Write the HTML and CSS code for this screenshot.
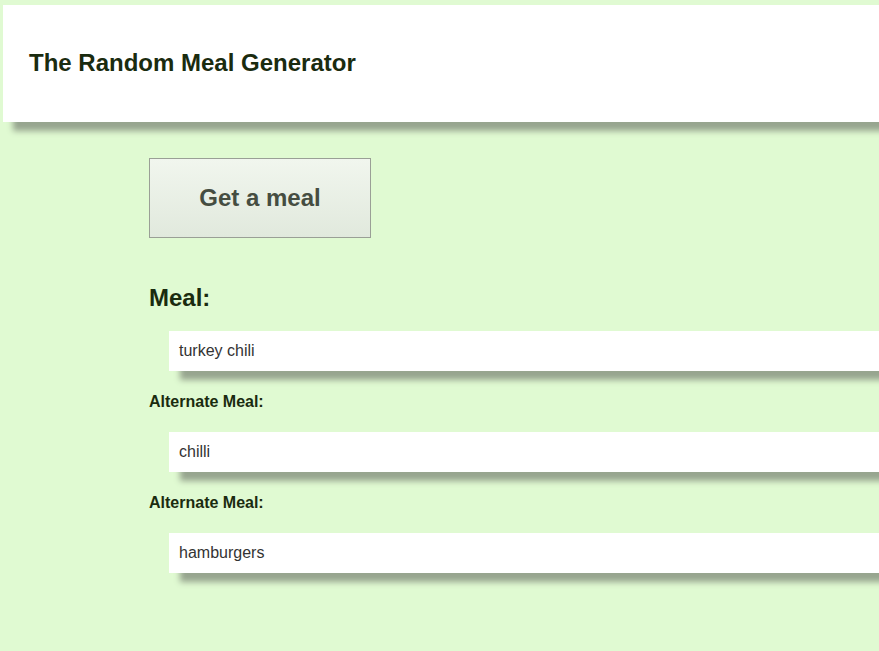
FILE: index.html
```html
<!DOCTYPE html>
<html>
<head>
<meta charset="utf-8">
<title>The Random Meal Generator</title>
<link rel="stylesheet" href="styles.css">
</head>
<body>
<header class="top">
  <h1 class="title">The Random Meal Generator</h1>
</header>
<main class="content">
  <button class="get-btn" type="button">Get a meal</button>
  <h2 class="meal-label">Meal:</h2>
  <div class="meal-box">turkey chili</div>
  <h3 class="alt-label">Alternate Meal:</h3>
  <div class="meal-box">chilli</div>
  <h3 class="alt-label">Alternate Meal:</h3>
  <div class="meal-box">hamburgers</div>
</main>
</body>
</html>
```
FILE: styles.css
```css
html, body {
  margin: 0;
  padding: 0;
  overflow: hidden;
}
body {
  background: #e0fad2;
  font-family: "Liberation Sans", Arial, sans-serif;
  color: #1a2b0f;
  padding-top: 5px;
  padding-left: 3px;
  height: 651px;
  box-sizing: border-box;
}
.top {
  background: #fff;
  height: 117px;
  display: flex;
  align-items: center;
  padding-left: 26px;
  box-shadow: 10px 9px 6px #97a58f;
}
.title {
  margin: 0;
  font-size: 24px;
  font-weight: bold;
  padding-bottom: 1px;
}
.content {
  padding-left: 146px;
  padding-top: 36px;
  display: flex;
  flex-direction: column;
  align-items: flex-start;
}
.get-btn {
  width: 222px;
  height: 80px;
  border: 1px solid #9a9f96;
  background: linear-gradient(#f1f6ee, #e1e9dd);
  font-family: "Liberation Sans", Arial, sans-serif;
  font-size: 24px;
  font-weight: bold;
  color: #454d41;
  padding: 0;
  margin: 0;
}
.meal-label {
  margin: 47px 0 0 0;
  font-size: 24px;
  line-height: 26px;
}
.meal-box {
  align-self: stretch;
  margin-left: 20px;
  background: #fff;
  height: 40px;
  line-height: 40px;
  padding-left: 10px;
  font-size: 16px;
  color: #333;
  box-shadow: 11px 9px 6px #97a58f;
}
.meal-label + .meal-box {
  margin-top: 20px;
}
.alt-label {
  margin: 22px 0 22px 0;
  font-size: 16px;
  line-height: 17px;
}
```
